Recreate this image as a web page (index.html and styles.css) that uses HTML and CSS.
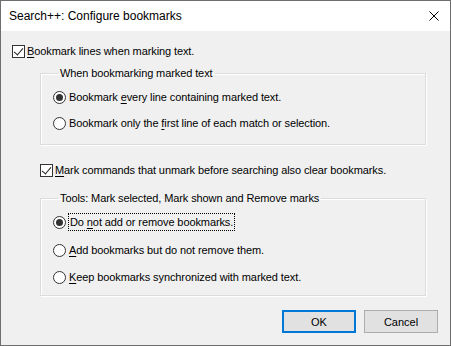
FILE: index.html
```html
<!DOCTYPE html>
<html lang="en">

<head>
    <meta charset="UTF-8">
    <title>Search++: Configure bookmarks</title>
    <link rel="stylesheet" href="styles.css">
</head>

<body>
    <div class="window">
        <div class="titlebar">
            <span class="title">Search++: Configure bookmarks</span>
            <svg class="close" width="10" height="10" viewBox="0 0 10 10">
                <path d="M0.5 0.5L9.5 9.5M9.5 0.5L0.5 9.5" stroke="#000" stroke-width="1" fill="none" />
            </svg>
        </div>
        <div class="content">
            <div class="row top-check">
                <span class="check checked"></span>
                <span class="label"><u>B</u>ookmark lines when marking text.</span>
            </div>

            <fieldset class="group first-group">
                <legend>When bookmarking marked text</legend>
                <div class="row radio-row r1">
                    <span class="radio checked"></span>
                    <span class="label">Bookmark <u>e</u>very line containing marked text.</span>
                </div>
                <div class="row radio-row r2">
                    <span class="radio"></span>
                    <span class="label">Bookmark only the <u>f</u>irst line of each match or selection.</span>
                </div>
            </fieldset>

            <div class="row mid-check">
                <span class="check checked"></span>
                <span class="label"><u>M</u>ark commands that unmark before searching also clear bookmarks.</span>
            </div>

            <fieldset class="group second-group">
                <legend>Tools: Mark selected, Mark shown and Remove marks</legend>
                <div class="row radio-row r3">
                    <span class="radio checked"></span>
                    <span class="label focused">Do <u>n</u>ot add or remove bookmarks.</span>
                </div>
                <div class="row radio-row r4">
                    <span class="radio"></span>
                    <span class="label"><u>A</u>dd bookmarks but do not remove them.</span>
                </div>
                <div class="row radio-row r5">
                    <span class="radio"></span>
                    <span class="label"><u>K</u>eep bookmarks synchronized with marked text.</span>
                </div>
            </fieldset>

            <div class="buttons">
                <button class="btn default">OK</button>
                <button class="btn">Cancel</button>
            </div>
        </div>
    </div>
</body>

</html>
```

FILE: styles.css
```css
body {
    margin: 0;
    font-family: "Liberation Sans", Arial, sans-serif;
    font-size: 11px;
    color: #000;
    background: #fff;
}

.window {
    width: 451px;
    height: 346px;
    box-sizing: border-box;
    border: 1px solid #6e6e6e;
    background: #f0f0f0;
    display: flex;
    flex-direction: column;
}

.titlebar {
    height: 30px;
    background: #fff;
    display: flex;
    align-items: center;
    padding-left: 8px;
    padding-right: 11px;
}

.title {
    flex: 1;
    font-size: 12px;
    line-height: 16px;
}

.close {
    display: block;
}

.content {
    flex: 1;
    padding: 0 12px 0 11px;
}

.row {
    display: flex;
    align-items: center;
    height: 16px;
    line-height: 16px;
    white-space: nowrap;
    letter-spacing: -0.1px;
}

.label u {
    text-decoration-thickness: 1px;
    text-underline-offset: 2px;
}

.top-check {
    margin-top: 12px;
}

.mid-check {
    margin-top: 17px;
    margin-left: 28px;
}

.check {
    width: 13px;
    height: 13px;
    box-sizing: border-box;
    border: 1px solid #333;
    background: #fff;
    margin-right: 2px;
    position: relative;
    flex: none;
}

.check.checked::after {
    content: "";
    position: absolute;
    left: 3px;
    top: 0px;
    width: 4px;
    height: 8px;
    border-right: 1px solid #222;
    border-bottom: 1px solid #222;
    transform: rotate(40deg);
}

.radio {
    width: 13px;
    height: 13px;
    box-sizing: border-box;
    border: 1px solid #333;
    border-radius: 50%;
    background: #fff;
    margin-right: 3px;
    position: relative;
    flex: none;
}

.radio.checked::after {
    content: "";
    position: absolute;
    left: 2px;
    top: 2px;
    width: 7px;
    height: 7px;
    border-radius: 50%;
    background: #333;
}

.group {
    margin: 6px 12px 0 28px;
    padding: 0 0 13px 12px;
    border: 1px solid #dcdcdc;
    box-shadow: inset 1px 1px 0 #fff, 1px 1px 0 #fff;
    min-width: 0;
}

.group legend {
    margin-left: 5px;
    padding: 0 2px;
    line-height: 16px;
    letter-spacing: -0.1px;
}

.r1 {
    margin-top: 8px;
}

.r2 {
    margin-top: 10px;
}

.second-group {
    margin-top: 12px;
    padding-bottom: 10px;
}

.r3 {
    margin-top: 8px;
}

.r4 {
    margin-top: 12px;
}

.r5 {
    margin-top: 11px;
}

.focused {
    outline: 1px dotted #000;
    outline-offset: 0;
    padding: 0 1px;
}

.buttons {
    display: flex;
    justify-content: flex-end;
    gap: 8px;
    margin-top: 14px;
}

.btn {
    width: 74px;
    height: 23px;
    background: #e1e1e1;
    border: 1px solid #adadad;
    font-family: inherit;
    font-size: 11px;
    color: #000;
    padding: 0;
}

.btn.default {
    border: 2px solid #0078d7;
}
```
